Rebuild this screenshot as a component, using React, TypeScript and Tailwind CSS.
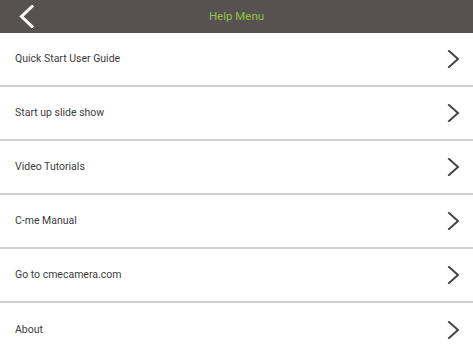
import React from "react";

const items = [
  "Quick Start User Guide",
  "Start up slide show",
  "Video Tutorials",
  "C-me Manual",
  "Go to cmecamera.com",
  "About",
];

function Chevron() {
  return (
    <svg width="14" height="18" viewBox="0 0 14 18" fill="none">
      <path d="M2 1 L11 9 L2 17" stroke="#444444" strokeWidth="2" strokeLinecap="square" strokeLinejoin="miter" />
    </svg>
  );
}

export default function App() {
  return (
    <div className="w-[473px] h-[355px] overflow-hidden bg-white" style={{ fontFamily: "Roboto, 'Liberation Sans', sans-serif" }}>
      <div className="relative h-[33px] bg-[#585151] flex items-center justify-center">
        <svg className="absolute left-[18px] top-[5px]" width="17" height="23" viewBox="0 0 17 23" fill="none">
          <path d="M14 1.5 L3.5 11.5 L14 21.5" stroke="#ffffff" strokeWidth="3" strokeLinecap="square" />
        </svg>
        <span className="text-[11.5px] text-[#8fc23e]">Help Menu</span>
      </div>
      {items.map((t, i) => (
        <div
          key={t}
          className={`h-[54px] flex items-center justify-between pl-[15px] pr-[12px] bg-white ${i < items.length - 1 ? "border-b-[2px] border-[#d0d0d0]" : ""}`}
        >
          <span className="text-[10.5px] text-[#3c3c3c]">{t}</span>
          <Chevron />
        </div>
      ))}
    </div>
  );
}
